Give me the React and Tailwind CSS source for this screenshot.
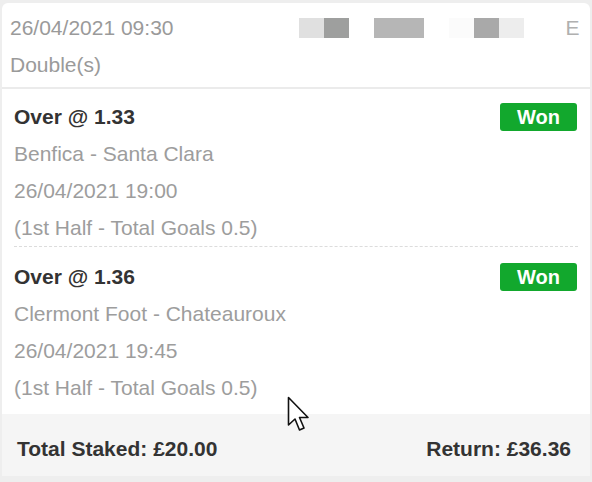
import React from 'react';

const legs = [
    { pick: 'Over @ 1.33', match: 'Benfica - Santa Clara', date: '26/04/2021 19:00', market: '(1st Half - Total Goals 0.5)' },
    { pick: 'Over @ 1.36', match: 'Clermont Foot - Chateauroux', date: '26/04/2021 19:45', market: '(1st Half - Total Goals 0.5)' },
];

const Cursor = () => (
    <svg className="absolute left-[287px] top-[396px]" width="24" height="38" viewBox="0 0 24 38">
        <path d="M1.5 1.5 L1.5 29 L8 23 L12.5 34 L17 32 L12.5 21.5 L21 21.5 Z" fill="#fff" stroke="#111" strokeWidth="1.6" strokeLinejoin="round" />
    </svg>
);

const App = () => {
    return (
        <div className="relative w-[592px] h-[482px] bg-[#eeeeee] px-[2px] pt-[3px] [font-family:'Liberation_Sans',Arial,sans-serif] text-[21px] leading-[37px]">
            <div className="bg-white rounded-t-[6px] overflow-hidden">
                {/* header */}
                <div className="pl-[8px] pt-[6px] pb-[4px] text-[#9a9a9a] border-b-2 border-[#ebebeb]">
                    <div className="flex items-center">
                        <span>26/04/2021 09:30</span>
                        <div className="flex ml-[125px]">
                            <div className="w-[25px] h-[20px] bg-[#e0e0e0]"></div>
                            <div className="w-[25px] h-[20px] bg-[#9e9f9e]"></div>
                            <div className="w-[25px] h-[20px] bg-white"></div>
                            <div className="w-[25px] h-[20px] bg-[#b6b6b6]"></div>
                            <div className="w-[25px] h-[20px] bg-[#b6b6b6]"></div>
                            <div className="w-[25px] h-[20px] bg-white"></div>
                            <div className="w-[25px] h-[20px] bg-[#fbfbfb]"></div>
                            <div className="w-[25px] h-[20px] bg-[#a9a9a9]"></div>
                            <div className="w-[25px] h-[20px] bg-[#ededed]"></div>
                        </div>
                        <span className="ml-[42px] text-[#b0b0b0]">E</span>
                    </div>
                    <div>Double(s)</div>
                </div>

                {/* legs */}
                <div className="px-[12px]">
                    {legs.map((leg, i) => (
                        <div key={i} className={i === 0 ? 'pt-[9px] border-b border-dashed border-[#dcdcdc]' : 'pt-[11px] pb-[8px]'}>
                            <div className="flex items-center justify-between">
                                <span className="font-bold text-[#333]">{leg.pick}</span>
                                <span className="bg-[#12a82d] text-white font-bold text-[20px] leading-[28px] px-[17px] rounded-[3px] mr-px">Won</span>
                            </div>
                            <div className="text-[#9d9d9d]">{leg.match}</div>
                            <div className="text-[#9d9d9d]">{leg.date}</div>
                            <div className="text-[#9d9d9d]">{leg.market}</div>
                        </div>
                    ))}
                </div>

                {/* footer */}
                <div className="flex items-center justify-between bg-[#f5f5f5] h-[62px] pl-[15px] pr-[19px] pt-[6px] font-bold text-[#333]">
                    <span>Total Staked: £20.00</span>
                    <span>Return: £36.36</span>
                </div>
            </div>
            <Cursor />
        </div>
    );
};

export default App;
